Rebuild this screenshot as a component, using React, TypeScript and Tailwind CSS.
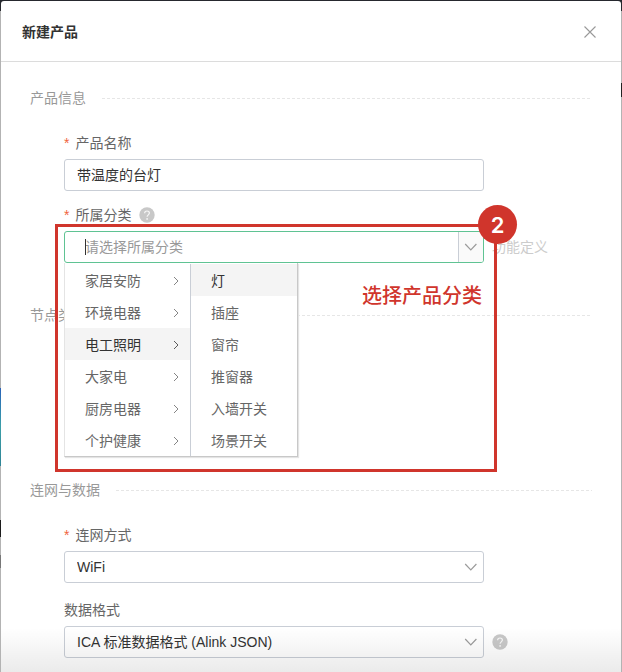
import { useState } from "react";
import type { ReactNode } from "react";

const categories = ["家居安防", "环境电器", "电工照明", "大家电", "厨房电器", "个护健康"];
const lighting = ["灯", "插座", "窗帘", "推窗器", "入墙开关", "场景开关"];

const ArrowDown = () => (
  <svg width="14" height="8" viewBox="0 0 14 8" fill="none" aria-hidden="true">
    <path d="M1.2 1l5.6 5.8L12.4 1" stroke="#9b9b9b" strokeWidth="1.2" />
  </svg>
);

const ArrowRight = () => (
  <svg width="6" height="10" viewBox="0 0 6 10" fill="none" aria-hidden="true">
    <path d="M1 1l4 4-4 4" stroke="currentColor" strokeWidth="0.8" />
  </svg>
);

const HelpIcon = () => (
  <svg className="ml-2 shrink-0" width="16" height="16" viewBox="0 0 16 16" fill="none" aria-hidden="true">
    <circle cx="8" cy="8" r="7.7" fill="#c8c8c8" />
    <path
      d="M5.6 6.3C5.6 4.8 6.6 4 8 4s2.4.8 2.4 2.1c0 1.6-2.3 1.9-2.3 3.7"
      stroke="#f7f7f7"
      strokeWidth="1.2"
    />
    <circle cx="8.1" cy="11.9" r=".85" fill="#f7f7f7" />
  </svg>
);

const Section = ({ title, children }: { title: string; children?: ReactNode }) => (
  <section>
    <div className="flex items-center h-6">
      <h2 className="text-[#999]">{title}</h2>
      <svg className="ml-4 flex-1 h-px" aria-hidden="true">
        <line x1="0" y1="0.5" x2="100%" y2="0.5" stroke="#e6e6e6" strokeDasharray="3 2" />
      </svg>
    </div>
    <div className="mt-[21px] pl-[34px]">{children}</div>
  </section>
);

const Label = ({ id, text, required, help }: { id: string; text: string; required?: boolean; help?: boolean }) => (
  <div className="flex items-center h-6 mb-1">
    <label htmlFor={id} className="text-[#666]">
      {required && <span className="text-[#f0643c] mr-[6px]">*</span>}
      {text}
    </label>
    {help && <HelpIcon />}
  </div>
);

const Select = ({ id, value }: { id: string; value: string }) => (
  <div className="relative w-full max-w-[420px]">
    <select
      id={id}
      className="appearance-none block w-full h-8 pl-3 pr-8 bg-white border border-[#c9ced6] rounded-[3px] text-[#333]"
    >
      <option>{value}</option>
    </select>
    <span className="absolute right-[6px] inset-y-0 flex items-center pointer-events-none">
      <ArrowDown />
    </span>
  </div>
);

const CategoryMenu = () => {
  const [category, setCategory] = useState("电工照明");
  const [item, setItem] = useState("灯");

  return (
    <div className="absolute z-10 top-full -left-px w-[234px] mt-px pt-px flex bg-white border border-t-0 border-l-[#e4e4e4] border-r-[#c8c8c8] border-b-[#c8c8c8] shadow-[1px_1px_1px_#e4e4e4]">
      <ul className="w-[126px] border-r border-[#c9ced6]">
        {categories.map((name) => (
          <li key={name}>
            <button
              type="button"
              onClick={() => setCategory(name)}
              className={`flex items-center justify-between w-full h-8 pt-0.5 pl-5 pr-[11px] ${
                name === category ? "bg-[#f4f4f4] text-[#333]" : "text-[#666]"
              }`}
            >
              {name}
              <ArrowRight />
            </button>
          </li>
        ))}
      </ul>
      <ul className="flex-1">
        {lighting.map((name) => (
          <li key={name}>
            <button
              type="button"
              onClick={() => setItem(name)}
              className={`w-full h-8 pt-0.5 pl-5 text-left ${
                name === item ? "bg-[#f4f4f4] text-[#333]" : "text-[#666]"
              }`}
            >
              {name}
            </button>
          </li>
        ))}
      </ul>
    </div>
  );
};

const StepMarker = () => (
  <div className="absolute z-20 -left-[10px] -right-[14px] -top-[8px] h-[248px] border-3 border-[#d0352c] pointer-events-none">
    <span className="absolute -top-[22px] -right-[23px] flex items-center justify-center size-[39px] rounded-full bg-[#d0352c] text-white text-[22px] font-semibold font-['Inter',sans-serif]">
      2
    </span>
    <p className="mt-[55px] mr-3 text-right text-[20px] leading-7 font-medium text-[#d0352c]">选择产品分类</p>
  </div>
);

const App = () => {
  const [name, setName] = useState("带温度的台灯");

  return (
    <div className="relative min-h-screen flex flex-col px-px pt-px bg-[#b3b3b3] text-[14px] leading-5 font-['Liberation_Sans','Noto_Sans_CJK_SC',sans-serif]">
      {/* page edges showing behind the dialog */}
      <div className="absolute inset-x-0 top-0 h-[11px] bg-[#26282e]" />
      <div className="absolute left-0 top-[388px] w-px h-[78px] bg-linear-to-b from-[#2b62b8] via-[#3c9fa8] to-[#2f8496]" />
      <div className="absolute left-0 top-[520px] w-px h-[17px] bg-[#1c1c1c]" />
      <div className="absolute left-0 top-[555px] w-px h-[13px] bg-[#777]" />
      <div className="absolute right-0 top-[83px] w-px h-[14px] bg-[#222]" />

      <div role="dialog" aria-labelledby="dialog-title" className="relative flex-1 bg-white rounded-t-[3px]">
        <header className="flex items-center justify-between h-[61px] pt-0.5 pl-[21px] pr-[25px] border-b border-[#dcdcdc]">
          <h1 id="dialog-title" className="font-bold text-[#333]">
            新建产品
          </h1>
          <button type="button" aria-label="关闭">
            <svg width="12" height="12" viewBox="0 0 12 12" fill="none">
              <path d="M.5.5l11 11M11.5.5l-11 11" stroke="#999" strokeWidth="1.1" />
            </svg>
          </button>
        </header>

        <form className="px-[29px] pt-6 pb-[14px]">
          <Section title="产品信息">
            <Label id="name" text="产品名称" required />
            <input
              id="name"
              type="text"
              value={name}
              onChange={(e) => setName(e.target.value)}
              className="block w-full max-w-[420px] h-8 px-3 pb-0.5 border border-[#c9ced6] rounded-[3px] text-[#333]"
            />

            <div className="mt-3">
              <Label id="category" text="所属分类" required help />
              <div className="flex items-center">
                <div className="relative flex w-full max-w-[420px] h-8 border border-[#5fc393] rounded-[3px]">
                  <input
                    id="category"
                    type="text"
                    placeholder="请选择所属分类"
                    className="flex-1 min-w-0 pl-5 outline-none placeholder:text-[#999]"
                  />
                  <span className="absolute left-5 top-[7px] w-px h-4 bg-[#333]" />
                  <button
                    type="button"
                    aria-label="展开"
                    className="flex items-center justify-center w-[25px] bg-[#fafafa] border-l border-[#c9ced6] rounded-r-[2px]"
                  >
                    <ArrowDown />
                  </button>
                  <CategoryMenu />
                  <StepMarker />
                </div>
                <a href="#" className="ml-2 shrink-0 text-[#ccc]">
                  功能定义
                </a>
              </div>
            </div>
          </Section>

          <div className="mt-10 min-h-[175px]">
            <Section title="节点类型" />
          </div>

          <Section title="连网与数据">
            <Label id="network" text="连网方式" required />
            <Select id="network" value="WiFi" />

            <div className="mt-[15px]">
              <Label id="format" text="数据格式" />
              <div className="flex items-center">
                <Select id="format" value="ICA 标准数据格式 (Alink JSON)" />
                <HelpIcon />
              </div>
            </div>
          </Section>
        </form>

        <div className="absolute inset-x-0 bottom-0 h-11 bg-linear-to-b from-black/0 to-black/8 pointer-events-none" />
      </div>
    </div>
  );
};

export default App;
